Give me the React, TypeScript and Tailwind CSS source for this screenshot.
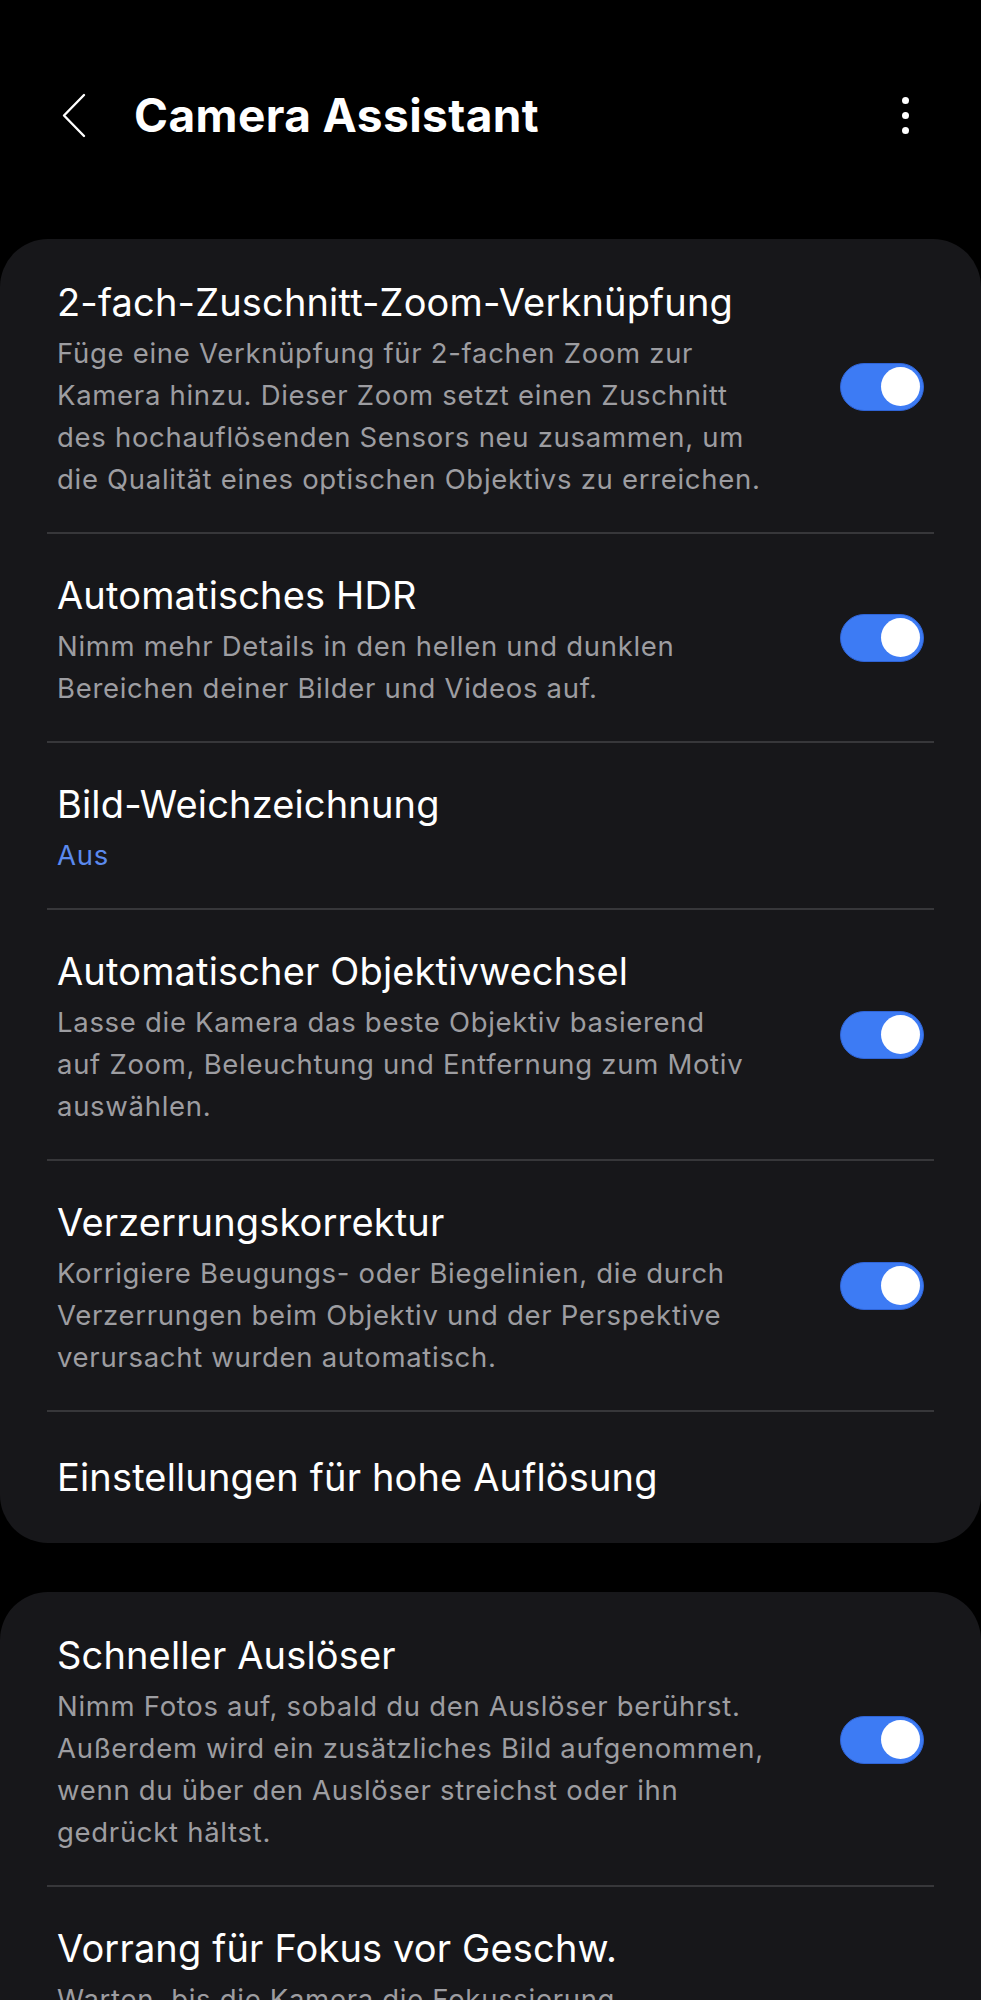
import React from "react";

type Row = {
  title: string;
  lines?: string[];
  value?: string;
  toggle?: boolean;
};

const groupOne: Row[] = [
  {
    title: "2-fach-Zuschnitt-Zoom-Verknüpfung",
    lines: [
      "Füge eine Verknüpfung für 2-fachen Zoom zur",
      "Kamera hinzu. Dieser Zoom setzt einen Zuschnitt",
      "des hochauflösenden Sensors neu zusammen, um",
      "die Qualität eines optischen Objektivs zu erreichen.",
    ],
    toggle: true,
  },
  {
    title: "Automatisches HDR",
    lines: [
      "Nimm mehr Details in den hellen und dunklen",
      "Bereichen deiner Bilder und Videos auf.",
    ],
    toggle: true,
  },
  { title: "Bild-Weichzeichnung", value: "Aus" },
  {
    title: "Automatischer Objektivwechsel",
    lines: [
      "Lasse die Kamera das beste Objektiv basierend",
      "auf Zoom, Beleuchtung und Entfernung zum Motiv",
      "auswählen.",
    ],
    toggle: true,
  },
  {
    title: "Verzerrungskorrektur",
    lines: [
      "Korrigiere Beugungs- oder Biegelinien, die durch",
      "Verzerrungen beim Objektiv und der Perspektive",
      "verursacht wurden automatisch.",
    ],
    toggle: true,
  },
  { title: "Einstellungen für hohe Auflösung" },
];

const groupTwo: Row[] = [
  {
    title: "Schneller Auslöser",
    lines: [
      "Nimm Fotos auf, sobald du den Auslöser berührst.",
      "Außerdem wird ein zusätzliches Bild aufgenommen,",
      "wenn du über den Auslöser streichst oder ihn",
      "gedrückt hältst.",
    ],
    toggle: true,
  },
  {
    title: "Vorrang für Fokus vor Geschw.",
    lines: [
      "Warten, bis die Kamera die Fokussierung",
      "abgeschlossen hat, bevor ein Foto aufgenommen",
      "wird. Dadurch kann sich die Aufnahme etwas",
      "verzögern.",
    ],
    toggle: true,
  },
];

const Toggle = () => (
  <div className="shrink-0 -translate-y-[3px] w-[84px] h-[48px] rounded-full bg-[#3d7bf4] border border-[#2f64d6] flex items-center justify-end pr-[3px]">
    <div className="w-[39px] h-[39px] rounded-full bg-white" />
  </div>
);

const SettingRow = ({ row, first }: { row: Row; first: boolean }) => {
  const single = !row.lines && !row.value;
  return (
    <div className="mx-[47px]">
      {!first && <div className="h-[2px] bg-[#37373a]" />}
      <div
        className={`flex items-center px-[10px] ${
          single ? "pt-[42px] pb-[43px]" : "pt-[38px] pb-[32px]"
        } ${first ? "pt-[40px]" : ""}`}
      >
        <div className="flex-1 min-w-0">
          <div className="text-[38px] leading-[46px] text-white tracking-[0.15px] whitespace-nowrap">
            {row.title}
          </div>
          {row.lines && (
            <div className="mt-[7px] text-[27.5px] leading-[42px] text-[#9d9da1] tracking-[0.7px] whitespace-nowrap">
              {row.lines.map((l, i) => (
                <div key={i}>{l}</div>
              ))}
            </div>
          )}
          {row.value && (
            <div className="mt-[7px] text-[27.5px] leading-[42px] text-[#5b8aee] tracking-[0.7px]">
              {row.value}
            </div>
          )}
        </div>
        {row.toggle && <Toggle />}
      </div>
    </div>
  );
};

export default function App() {
  return (
    <div
      className="w-[981px] h-[2000px] overflow-hidden bg-black"
      style={{ fontFamily: "Inter, Roboto, 'Noto Sans', sans-serif" }}
    >
      {/* top bar */}
      <div className="pt-[85px] h-[145px] flex items-center pl-[61px] pr-[72px]">
        <svg width="26" height="45" viewBox="0 0 26 45" className="shrink-0">
          <path d="M23 2 L3 22.5 L23 43" fill="none" stroke="white" strokeWidth="2.4" strokeLinecap="round" strokeLinejoin="round" />
        </svg>
        <div className="ml-[47px] flex-1 text-[46px] font-bold text-white tracking-[0.4px] leading-none">
          Camera Assistant
        </div>
        <div className="flex flex-col items-center gap-[8px]">
          <span className="w-[7px] h-[7px] rounded-full bg-white" />
          <span className="w-[7px] h-[7px] rounded-full bg-white" />
          <span className="w-[7px] h-[7px] rounded-full bg-white" />
        </div>
      </div>

      <div className="mt-[94px] rounded-[48px] bg-[#17171a]">
        {groupOne.map((r, i) => (
          <SettingRow key={r.title} row={r} first={i === 0} />
        ))}
      </div>

      <div className="mt-[49px] rounded-[48px] bg-[#17171a]">
        {groupTwo.map((r, i) => (
          <SettingRow key={r.title} row={r} first={i === 0} />
        ))}
      </div>
    </div>
  );
}
